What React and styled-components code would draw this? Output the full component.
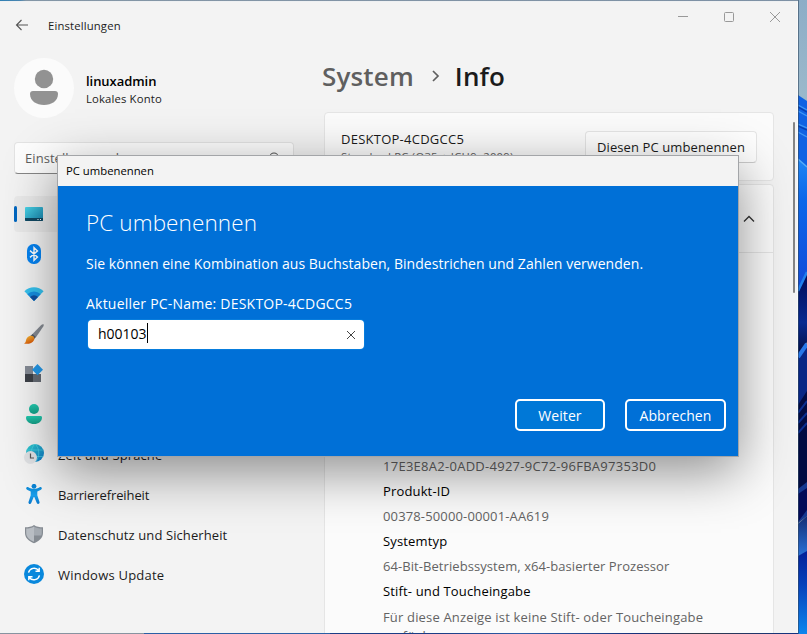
import React from "react";
import styled, { createGlobalStyle } from "styled-components";

const Global = createGlobalStyle`
  * { box-sizing: border-box; }
  body { margin: 0; overflow: hidden; }
  button, input { font: inherit; }
`;

const Desktop = styled.div`
  position: relative;
  width: 807px;
  height: 634px;
  overflow: hidden;
  display: grid;
  grid-template-columns: 798px 9px;
  background: linear-gradient(90deg, #2f7fb4 0, #4b86b0 20px, #8496a6 26px, #7d90a4 100%);
  font-family: "Open Sans", "Noto Sans", sans-serif;
  color: #1b1b1b;
`;

const Window = styled.div`
  height: 634px;
  padding-top: 1px;
  background: linear-gradient(90deg, #8793a0 0 144px, #2a5fa5 144px 330px, #1b3d86 330px 440px, #2f5ea8 520px, #16307a 640px, #333b49 700px, #14337f 790px) 0 100% / 100% 2px no-repeat;
`;

const WindowBody = styled.div`
  height: 632px;
  overflow: hidden;
  background: #f3f3f3;
  border-top: 1px solid #eef0f2;
  border-right: 1px solid #fafafa;
  display: grid;
  grid-template-columns: 324px 450px 1fr;
`;

const Wallpaper = styled.svg`
  display: block;
  width: 9px;
  height: 634px;
`;

const Text = styled.span`
  display: block;
  margin: 0;
  white-space: ${(p) => (p.$wrap ? "normal" : "nowrap")};
  font-size: ${(p) => p.$size || 13}px;
  line-height: ${(p) => p.$line || 20}px;
  font-weight: ${(p) => p.$weight || 400};
  letter-spacing: ${(p) => p.$track ?? 0.06}px;
  color: ${(p) => p.$color || "#1b1b1b"};
`;

const Sidebar = styled.aside`
  padding: 15px 30px 0 14px;
  display: flex;
  flex-direction: column;
`;

const TitleBar = styled.div`
  display: flex;
  align-items: center;
  gap: 18px;
  height: 18px;
  padding-left: 1px;
  svg { margin-top: -2px; }
`;

const Profile = styled.div`
  display: flex;
  align-items: center;
  gap: 12px;
  margin-top: 23px;
  height: 60px;
`;

const Avatar = styled.svg`
  width: 60px;
  height: 60px;
`;

const ProfileText = styled.div`
  padding-top: 2px;
`;

const Search = styled.div`
  display: flex;
  align-items: center;
  justify-content: space-between;
  width: 280px;
  height: 32px;
  margin-top: 24px;
  padding: 0 13px 0 10px;
  background: #fdfdfd;
  border: 1px solid #e3e3e3;
  border-bottom-color: #868686;
  border-radius: 4px;
`;

const Nav = styled.nav`
  display: flex;
  flex-direction: column;
  gap: 4px;
  margin-top: 22px;
`;

const NavItem = styled.div`
  display: flex;
  align-items: center;
  gap: 14px;
  width: 280px;
  height: 36px;
  padding-left: ${(p) => (p.$active ? 0 : 10)}px;
  border-radius: 4px;
  background: ${(p) => (p.$active ? "#eaeaea" : "transparent")};
  svg { flex: none; display: block; }
  span { padding-top: 2px; }
`;

const ActiveMark = styled.i`
  width: 3px;
  height: 16px;
  margin-right: -7px;
  border-radius: 2px;
  background: #0067c0;
`;

const Main = styled.main`
  display: flex;
  flex-direction: column;
`;

const Breadcrumb = styled.header`
  display: flex;
  align-items: center;
  height: 40px;
  margin: 54px 0 0 -2px;
`;

const Chevron = styled.svg`
  margin: -1px 15px 0 17px;
`;

const Card = styled.section`
  border: 1px solid #e5e5e5;
  border-radius: 4px;
  background: #fbfbfb;
`;

const DeviceCard = styled(Card)`
  display: flex;
  justify-content: space-between;
  height: 69px;
  margin-top: 16px;
  padding: 16px 16px 0;
`;

const RenameButton = styled.button`
  width: 172px;
  height: 32px;
  margin-top: 2px;
  padding: 0;
  display: flex;
  align-items: center;
  justify-content: center;
  border: 1px solid #e5e5e5;
  border-bottom-color: #cccccc;
  border-radius: 4px;
  background: #fefefe;
`;

const SpecsCard = styled(Card)`
  margin-top: 3px;
  height: 480px;
  flex: none;
`;

const SpecsHead = styled.div`
  display: flex;
  justify-content: flex-end;
  align-items: center;
  height: 68px;
  padding-right: 18px;
  border-bottom: 1px solid #e5e5e5;
`;

const SpecsList = styled.dl`
  margin: 0;
  padding: 201px 50px 0 58px;
`;

const LastSpec = styled.dd`
  margin: 4px 0 0;
`;

const Rail = styled.div`
  display: flex;
  justify-content: flex-end;
  padding: 120px 2px 0 0;
`;

const Thumb = styled.div`
  width: 2px;
  height: 171px;
  border-radius: 1px;
  background: #858585;
`;

const Caption = styled.svg`
  position: absolute;
  left: 677px;
  top: 10px;
`;

const Dialog = styled.div`
  position: absolute;
  left: 57px;
  top: 155px;
  width: 682px;
  height: 302px;
  border: 1px solid #a3a5a8;
  background: #0070d7;
  box-shadow: 0 15px 50px rgba(0, 0, 0, 0.43);
`;

const DialogTitle = styled.div`
  height: 30px;
  padding: 5px 0 0 8px;
  background: #f3f3f3;
`;

const DialogBody = styled.div`
  height: 270px;
  padding: 20px 12px 0 28px;
  display: flex;
  flex-direction: column;
`;

const Messages = styled.div`
  display: flex;
  flex-direction: column;
  gap: 20px;
  margin-top: 14px;
`;

const Field = styled.div`
  display: flex;
  align-items: center;
  width: 276px;
  height: 29px;
  margin: 6px 0 0 2px;
  padding: 0 8px 0 10px;
  border-radius: 4px;
  background: #fff;
  box-shadow: 0 0 0 1px #087ddd;
  span { padding-bottom: 2px; }
  svg { margin-left: auto; }
`;

const Caret = styled.i`
  width: 1px;
  height: 20px;
  margin-top: -3px;
  background: #000;
`;

const Actions = styled.div`
  display: flex;
  justify-content: flex-end;
  gap: 20px;
  margin-top: 50px;
`;

const DialogButton = styled.button`
  width: ${(p) => p.$width}px;
  height: 32px;
  padding: 1px 0 0;
  display: flex;
  justify-content: center;
  align-items: center;
  border: 2px solid #fff;
  border-radius: 5px;
  background: ${(p) => (p.$primary ? "#0078d7" : "transparent")};
`;

const icons = {
  system: (
    <svg width="20" height="20" viewBox="0 0 20 20">
      <defs><linearGradient id="scr" x1="0" y1="0" x2="1" y2="1"><stop stopColor="#4bd5e8" /><stop offset="1" stopColor="#1683ad" /></linearGradient></defs>
      <rect x="1" y="3" width="18" height="14" rx="1" fill="url(#scr)" />
      <path d="M1 14h18v2a1 1 0 0 1-1 1H2a1 1 0 0 1-1-1z" fill="#104862" />
      <path d="M13.500 15.500h1M16 15.500h1" stroke="#fff" />
    </svg>
  ),
  bluetooth: (
    <svg width="20" height="20" viewBox="0 0 20 20">
      <rect x="3" y="0" width="14" height="20" rx="6.500" fill="#0583f2" />
      <path d="M6 6.600l7.500 6.500L10 16.300V3.700l3.500 3.200L6 13.400" fill="none" stroke="#fff" strokeWidth="1.400" />
    </svg>
  ),
  network: (
    <svg width="20" height="20" viewBox="0 0 20 20">
      <path d="M.4 7.300a13.600 13.600 0 0 1 19.200 0L10 17z" fill="#35c1ee" />
      <path d="M3.300 10.200a9.500 9.500 0 0 1 13.400 0L10 17z" fill="#168fe0" />
      <path d="M6 12.900a5.700 5.700 0 0 1 8 0L10 17z" fill="#104fa0" />
    </svg>
  ),
  personalize: (
    <svg width="20" height="20" viewBox="0 0 20 20">
      <defs><linearGradient id="br" x1="0" y1="0" x2=".5" y2="1"><stop stopColor="#f9c43c" /><stop offset="1" stopColor="#d95a08" /></linearGradient></defs>
      <path d="M19.500.3c.5.5.2 1.400-.2 2.100l-7.500 11.200-3.800-3L17 1.200c.8-.7 1.900-1.400 2.500-.9z" fill="#858a92" />
      <path d="M8.600 10l3.300 3-2 2.300-3.600-3.200z" fill="#505864" />
      <path d="M6.300 11.700c3.200-.4 4.800 1.900 3.800 4.200-1.500 3.600-6.400 4.500-10.100 3.700 2-.8 1.500-2.200 2.300-4.300.7-2 2.200-3.300 4-3.600z" fill="url(#br)" />
    </svg>
  ),
  apps: (
    <svg width="20" height="20" viewBox="0 0 20 20">
      <path d="M1 2h8v8H1z" fill="#858b95" />
      <path d="M1 10h8v8H1z" fill="#3d4148" />
      <path d="M9 10h8v8H9z" fill="#656b74" />
      <path d="M13.500 0l5.500 5.700-5.500 5.600L8 5.700z" fill="#2398e8" />
    </svg>
  ),
  accounts: (
    <svg width="20" height="20" viewBox="0 0 20 20">
      <defs><linearGradient id="acc" x1="0" y1="0" x2="0" y2="1"><stop stopColor="#23cbb0" /><stop offset="1" stopColor="#159e86" /></linearGradient></defs>
      <circle cx="10" cy="5" r="5" fill="url(#acc)" />
      <path d="M3.500 12h13c1 0 1.500.7 1.500 1.500 0 4-3.500 6.500-8 6.500s-8-2.500-8-6.500c0-.8.5-1.500 1.500-1.500z" fill="url(#acc)" />
    </svg>
  ),
  time: (
    <svg width="20" height="20" viewBox="0 0 20 20">
      <defs><linearGradient id="gl" x1="0" y1="0" x2="1" y2="1"><stop stopColor="#33d1cf" /><stop offset="1" stopColor="#0b73c5" /></linearGradient></defs>
      <circle cx="11" cy="9" r="9" fill="url(#gl)" />
      <path d="M2.500 6h17M2.500 12.500h17M11 0c-5 4-5 14 0 18M11 0c5 4 5 14 0 18" fill="none" stroke="#58dce8" strokeOpacity=".8" strokeWidth=".7" />
      <circle cx="6.500" cy="13.500" r="6.500" fill="#dfe1e4" />
      <path d="M6.500 9.500v4.500h3.500" fill="none" stroke="#555" strokeWidth="1.200" />
    </svg>
  ),
  access: (
    <svg width="20" height="20" viewBox="0 0 20 20">
      <defs><linearGradient id="man" x1="0" y1="0" x2="0" y2="1"><stop stopColor="#0c8ad8" /><stop offset=".5" stopColor="#1ba0ed" /><stop offset="1" stopColor="#0877cd" /></linearGradient></defs>
      <circle cx="10" cy="2.300" r="2.400" fill="#0b84d4" />
      <path d="M2.300 3.700c.5-1 1.300-.8 2-.5 3.800 2.200 7.600 2.200 11.400 0 .8-.4 1.600-.3 2 .5.400.9 0 1.500-.7 2l-3.700 1.900v3.700l2.200 6.600c.5 1.900-1.900 2.800-2.700 1L10.300 13h-.6l-2.500 6c-.8 1.700-3.100.8-2.700-1L6.700 11.300V7.600L3 5.700c-.7-.5-1.100-1.100-.7-2z" fill="url(#man)" />
    </svg>
  ),
  privacy: (
    <svg width="20" height="20" viewBox="0 0 20 20">
      <path d="M10 1c2.500 1.900 5.500 2.300 9 2.300v5.700c0 5-4.200 8.400-9 10.200C5.200 17.400 1 14 1 9V3.300C4.500 3.300 7.500 2.900 10 1z" fill="#858b92" />
      <path d="M10 2.400v15.400C5.500 16 2.200 13 2.200 9V4.500C5 4.400 7.800 3.800 10 2.400z" fill="#b8bdc3" />
      <path d="M10 2.400c2.200 1.400 5 2 7.800 2.100V9c0 1-.2 1.800-.5 2.500H10z" fill="#a4aab1" />
    </svg>
  ),
  update: (
    <svg width="20" height="20" viewBox="0 0 20 20">
      <circle cx="10" cy="10" r="10" fill="#0988dc" />
      <path d="M4.500 8.700A5.800 5.800 0 0 1 14.700 6.500M15.500 11.300A5.800 5.800 0 0 1 5.300 13.500M15.200 3.800v3.400h-3.700M4.800 16.200v-3.400h3.700" fill="none" stroke="#fff" strokeWidth="1.400" />
    </svg>
  ),
};

const navItems = [
  { icon: "system", active: true },
  { icon: "bluetooth" },
  { icon: "network" },
  { icon: "personalize" },
  { icon: "apps" },
  { icon: "accounts" },
  { icon: "time", label: "Zeit und Sprache", track: 0.12 },
  { icon: "access", label: "Barrierefreiheit", track: -0.1 },
  { icon: "privacy", label: "Datenschutz und Sicherheit", track: 0.1 },
  { icon: "update", label: "Windows Update", track: 0.22 },
];

const specs = [
  { value: "17E3E8A2-0ADD-4927-9C72-96FBA97353D0", track: 0.27 },
  { term: "Produkt-ID", value: "00378-50000-00001-AA619", track: 0.14 },
  { term: "Systemtyp", value: "64-Bit-Betriebssystem, x64-basierter Prozessor", track: 0.07 },
  { term: "Stift- und Toucheingabe" },
];

export default function App() {
  return (
    <Desktop>
      <Global />
      <Window>
        <WindowBody>
          <Sidebar>
            <TitleBar>
              <svg width="15" height="12" viewBox="0 0 15 12">
                <path d="M13 6H1.500M6.500 1L1.500 6l5 5" fill="none" stroke="#555" strokeWidth="1.100" />
              </svg>
              <Text $size={11.300} $line={18} $track={0.15}>Einstellungen</Text>
            </TitleBar>
            <Profile>
              <Avatar viewBox="0 0 60 60">
                <circle cx="30" cy="30" r="30" fill="#fbfbfb" />
                <circle cx="30" cy="21" r="9.200" fill="#929292" />
                <path d="M19 33h22q3 0 3 3c0 7-6.500 11-14 11s-14-4-14-11q0-3 3-3z" fill="#929292" />
              </Avatar>
              <ProfileText>
                <Text $size={13} $line={18} $weight={600} $color="#000" $track={-0.05}>linuxadmin</Text>
                <Text $size={11.300} $line={17} $track={0.15}>Lokales Konto</Text>
              </ProfileText>
            </Profile>
            <Search>
              <Text $color="#606060">Einstellung suchen</Text>
              <svg width="12" height="14" viewBox="0 0 12 14">
                <circle cx="6" cy="6" r="4" fill="none" stroke="#555" strokeWidth="1.100" />
                <path d="M3 9L.5 12" stroke="#555" strokeWidth="1.100" />
              </svg>
            </Search>
            <Nav>
              {navItems.map((n) => (
                <NavItem key={n.icon} $active={n.active}>
                  {n.active && <ActiveMark />}
                  {icons[n.icon]}
                  {n.label && <Text $track={n.track}>{n.label}</Text>}
                </NavItem>
              ))}
            </Nav>
          </Sidebar>
          <Main>
            <Breadcrumb>
              <Text $size={26} $line={40} $weight={600} $color="#5f5f5f" $track={0.15}>System</Text>
              <Chevron width="9" height="12" viewBox="0 0 9 12">
                <path d="M2 1l5 5-5 5" fill="none" stroke="#5f5f5f" strokeWidth="1.700" />
              </Chevron>
              <Text $size={26} $line={40} $weight={600} $track={0.1}>Info</Text>
            </Breadcrumb>
            <DeviceCard>
              <div>
                <Text $track={0.25}>DESKTOP-4CDGCC5</Text>
                <Text $size={11.300} $line={16} $color="#606060" $track={0.24}>Standard PC (Q35 + ICH9, 2009)</Text>
              </div>
              <RenameButton><Text $track={0.1}>Diesen PC umbenennen</Text></RenameButton>
            </DeviceCard>
            <SpecsCard>
              <SpecsHead>
                <svg width="12" height="8" viewBox="0 0 12 8">
                  <path d="M1 6.500l5-5 5 5" fill="none" stroke="#333" strokeWidth="1.300" />
                </svg>
              </SpecsHead>
              <SpecsList>
                {specs.map((s, i) => (
                  <React.Fragment key={i}>
                    {s.term && <Text as="dt" $line={25} $color="#000" $track={0.15}>{s.term}</Text>}
                    {s.value && <Text as="dd" $line={25} $color="#636363" $track={s.track}>{s.value}</Text>}
                  </React.Fragment>
                ))}
                <LastSpec>
                  <Text $wrap $line={19} $color="#636363" $track={0.165}>Für diese Anzeige ist keine Stift- oder Toucheingabe verfügbar</Text>
                </LastSpec>
              </SpecsList>
            </SpecsCard>
          </Main>
          <Rail><Thumb /></Rail>
        </WindowBody>
      </Window>
      <Wallpaper viewBox="0 0 9 634">
        <defs>
          <linearGradient id="sky" x1="0" y1="0" x2="0" y2="1"><stop stopColor="#8dadc7" /><stop offset="1" stopColor="#9cbacb" /></linearGradient>
          <linearGradient id="petal" x1="0" y1="0" x2="0" y2="1"><stop stopColor="#1f86f5" /><stop offset=".3" stopColor="#0c67ea" /><stop offset="1" stopColor="#1249d8" /></linearGradient>
          <linearGradient id="deep" x1="0" y1="0" x2="0" y2="1"><stop stopColor="#020a55" /><stop offset=".6" stopColor="#082a90" /><stop offset="1" stopColor="#020c40" /></linearGradient>
          <linearGradient id="glow" x1="0" y1="0" x2="0" y2="1"><stop stopColor="#152e75" /><stop offset="1" stopColor="#2a72d8" /></linearGradient>
          <linearGradient id="base" x1="0" y1="0" x2="0" y2="1"><stop stopColor="#032098" /><stop offset=".4" stopColor="#0640ba" /><stop offset="1" stopColor="#0c86ee" /></linearGradient>
        </defs>
        <rect width="9" height="110" fill="url(#sky)" />
        <path d="M0 95l9 6v68l-9-8z" fill="#0f62e3" />
        <path d="M0 105l9 5M0 111l9 5M0 124l9 4M0 132l9 5" stroke="#3d96f5" strokeWidth="1.300" />
        <path d="M0 107l9 5M0 126l9 4" stroke="#0540b5" strokeWidth="1.500" />
        <path d="M0 159l9 8v110l-9 16z" fill="url(#petal)" />
        <path d="M0 159l9 8" stroke="#55acf8" strokeWidth="1.500" />
        <path d="M0 290l9-18v70l-9 14z" fill="url(#deep)" />
        <path d="M0 291l9-19" stroke="#1f80ee" strokeWidth="2.500" />
        <path d="M0 356l9-12v50l-9 12z" fill="#0a2785" />
        <path d="M0 357l9-13" stroke="#2877e8" strokeWidth="4" />
        <path d="M0 405l9-14v100H0z" fill="#020b42" />
        <path d="M0 413l9-12M0 423l9-10M0 433l9-10" stroke="#0a2e91" strokeWidth="2" />
        <path d="M0 489l9-7v34l-9 7z" fill="#163890" />
        <path d="M0 494l9-6v22l-9 12z" fill="#030b58" />
        <path d="M0 524l9-8v36l-9 4z" fill="url(#glow)" />
        <path d="M0 556l9-5v83H0z" fill="url(#base)" />
        <path d="M.5 0v634" stroke="#30475f" strokeOpacity=".6" />
      </Wallpaper>
      <Caption width="106" height="14" viewBox="0 0 106 14">
        <path d="M1 6.500h10" stroke="#999" />
        <rect x="47.500" y="2.500" width="9" height="9" rx="1" fill="none" stroke="#999" />
        <path d="M93 2l10 10M103 2L93 12" stroke="#999" />
      </Caption>
      <Dialog>
        <DialogTitle><Text $size={11.300} $color="#000" $track={0}>PC umbenennen</Text></DialogTitle>
        <DialogBody>
          <Text $size={22.500} $line={34} $weight={330} $color="#fff" $track={0.1}>PC umbenennen</Text>
          <Messages>
            <Text $size={14} $color="#fff" $track={0.04}>Sie können eine Kombination aus Buchstaben, Bindestrichen und Zahlen verwenden.</Text>
            <Text $size={14} $color="#fff" $track={0.22}>Aktueller PC-Name: DESKTOP-4CDGCC5</Text>
          </Messages>
          <Field>
            <Text $size={14} $color="#000" $track={0}>h00103</Text>
            <Caret />
            <svg width="10" height="10" viewBox="0 0 10 10"><path d="M1 1l8 8M9 1L1 9" stroke="#444" /></svg>
          </Field>
          <Actions>
            <DialogButton $width={90} $primary><Text $size={14} $color="#fff">Weiter</Text></DialogButton>
            <DialogButton $width={101}><Text $size={14} $color="#fff">Abbrechen</Text></DialogButton>
          </Actions>
        </DialogBody>
      </Dialog>
    </Desktop>
  );
}
